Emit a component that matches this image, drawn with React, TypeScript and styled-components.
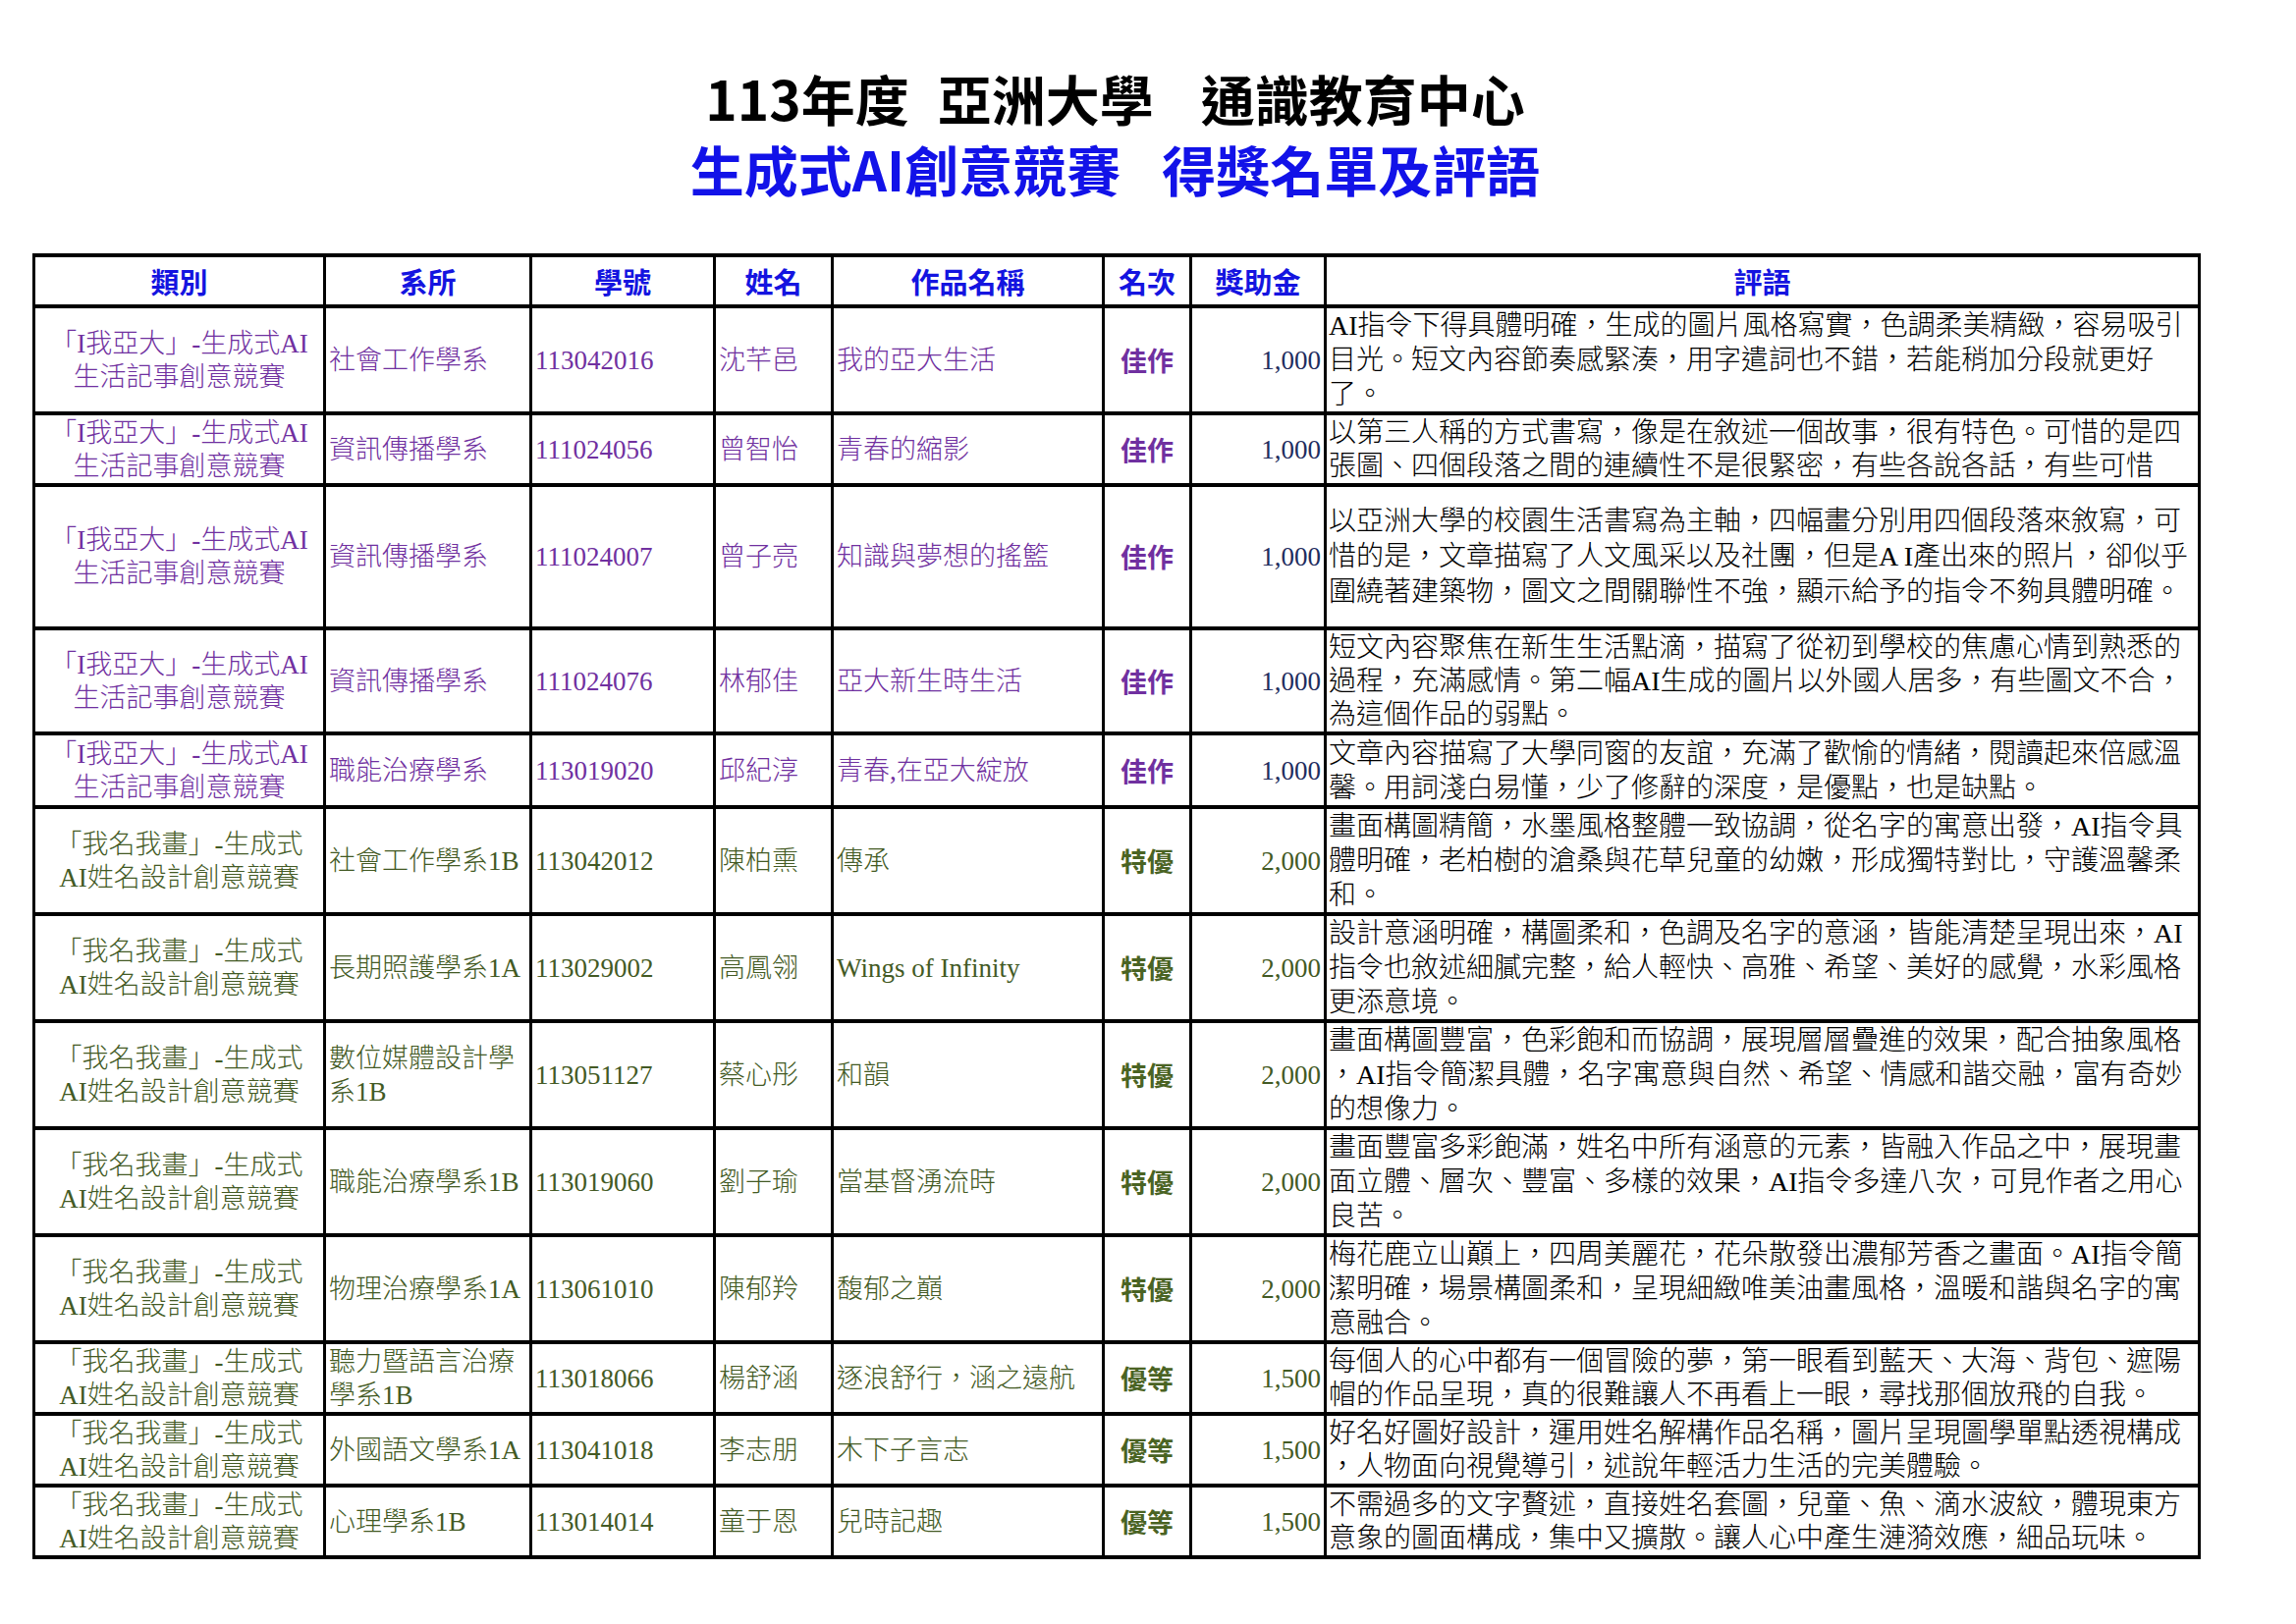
import React from "react";
import styled, { createGlobalStyle } from "styled-components";

const GlobalStyle = createGlobalStyle`
  html, body {
    margin: 0;
    padding: 0;
    background: #ffffff;
  }
  body {
    font-family: "Liberation Serif", "Noto Sans CJK TC", serif;
  }
`;

type Tone = "purple" | "green";

const tones: Record<Tone, { text: string; rank: string; amount: string }> = {
  purple: { text: "#7030a0", rank: "#7030a0", amount: "#1f2d5e" },
  green: { text: "#435a24", rank: "#4a6323", amount: "#435a24" }
};

const Page = styled.div`
  width: 2338px;
  min-height: 1654px;
  box-sizing: border-box;
  padding: 72px 0 0 33px;
`;

const Sheet = styled.div`
  width: 2205px;
`;

const Titles = styled.header`
  display: flex;
  flex-direction: column;
  align-items: center;
  gap: 17px;
`;

const Title = styled.h1<{ $color: string }>`
  margin: 0;
  font-family: "Noto Sans CJK TC", sans-serif;
  font-weight: 700;
  font-size: 55px;
  line-height: 55px;
  white-space: nowrap;
  color: ${p => p.$color};
`;

const Gap = styled.span<{ $w: number }>`
  display: inline-block;
  width: ${p => p.$w}px;
`;

const Table = styled.table`
  margin-top: 59px;
  width: 2205px;
  border-collapse: collapse;
  table-layout: fixed;
`;

const Row = styled.tr<{ $h: number }>`
  height: ${p => p.$h}px;
`;

const HeadCell = styled.th`
  border: 3px solid #000;
  border-top-width: 4px;
  border-bottom-width: 4px;
  padding: 0;
  font-family: "Noto Sans CJK TC", sans-serif;
  font-weight: 700;
  font-size: 29px;
  line-height: 36px;
  color: #1414e0;
  text-align: center;
  vertical-align: middle;
`;

const Cell = styled.td<{ $tone: Tone }>`
  border: 3px solid #000;
  border-top-width: 4px;
  border-bottom-width: 4px;
  padding: 0 3px;
  font-size: 27px;
  font-weight: 300;
  line-height: 34px;
  color: ${p => tones[p.$tone].text};
  text-align: left;
  vertical-align: middle;
  overflow: hidden;
`;

const CategoryCell = styled(Cell)`
  text-align: center;
  padding: 0;
`;

const RankCell = styled(Cell)`
  font-family: "Noto Sans CJK TC", sans-serif;
  font-weight: 700;
  text-align: center;
  color: ${p => tones[p.$tone].rank};
`;

const AmountCell = styled(Cell)`
  text-align: right;
  font-weight: 400;
  color: ${p => tones[p.$tone].amount};
`;

const CommentCell = styled(Cell)<{ $lh: number }>`
  font-size: 28px;
  line-height: ${p => p.$lh}px;
  color: #000;
  padding: 0 2px;
`;

const Line = styled.div`
  white-space: nowrap;
`;

const Lines = ({ lines }: { lines: string[] }) => (
  <>
    {lines.map((l, i) => (
      <Line key={i}>{l}</Line>
    ))}
  </>
);

type Entry = {
  tone: Tone;
  h: number;
  dept: string[];
  id: string;
  name: string;
  work: string;
  rank: string;
  amount: string;
  comment: string[];
};

const catA = ["「I我亞大」-生成式AI", "生活記事創意競賽"];
const catB = ["「我名我畫」-生成式", "AI姓名設計創意競賽"];

const entries: Entry[] = [
  {
    tone: "purple",
    h: 109,
    dept: ["社會工作學系"],
    id: "113042016",
    name: "沈芊邑",
    work: "我的亞大生活",
    rank: "佳作",
    amount: "1,000",
    comment: [
      "AI指令下得具體明確，生成的圖片風格寫實，色調柔美精緻，容易吸引",
      "目光。短文內容節奏感緊湊，用字遣詞也不錯，若能稍加分段就更好",
      "了。"
    ]
  },
  {
    tone: "purple",
    h: 73,
    dept: ["資訊傳播學系"],
    id: "111024056",
    name: "曾智怡",
    work: "青春的縮影",
    rank: "佳作",
    amount: "1,000",
    comment: [
      "以第三人稱的方式書寫，像是在敘述一個故事，很有特色。可惜的是四",
      "張圖、四個段落之間的連續性不是很緊密，有些各說各話，有些可惜"
    ]
  },
  {
    tone: "purple",
    h: 146,
    dept: ["資訊傳播學系"],
    id: "111024007",
    name: "曾子亮",
    work: "知識與夢想的搖籃",
    rank: "佳作",
    amount: "1,000",
    comment: [
      "以亞洲大學的校園生活書寫為主軸，四幅畫分別用四個段落來敘寫，可",
      "惜的是，文章描寫了人文風采以及社團，但是A I產出來的照片，卻似乎",
      "圍繞著建築物，圖文之間關聯性不強，顯示給予的指令不夠具體明確。"
    ]
  },
  {
    tone: "purple",
    h: 107,
    dept: ["資訊傳播學系"],
    id: "111024076",
    name: "林郁佳",
    work: "亞大新生時生活",
    rank: "佳作",
    amount: "1,000",
    comment: [
      "短文內容聚焦在新生生活點滴，描寫了從初到學校的焦慮心情到熟悉的",
      "過程，充滿感情。第二幅AI生成的圖片以外國人居多，有些圖文不合，",
      "為這個作品的弱點。"
    ]
  },
  {
    tone: "purple",
    h: 75,
    dept: ["職能治療學系"],
    id: "113019020",
    name: "邱紀淳",
    work: "青春,在亞大綻放",
    rank: "佳作",
    amount: "1,000",
    comment: [
      "文章內容描寫了大學同窗的友誼，充滿了歡愉的情緒，閱讀起來倍感溫",
      "馨。用詞淺白易懂，少了修辭的深度，是優點，也是缺點。"
    ]
  },
  {
    tone: "green",
    h: 109,
    dept: ["社會工作學系1B"],
    id: "113042012",
    name: "陳柏熏",
    work: "傳承",
    rank: "特優",
    amount: "2,000",
    comment: [
      "畫面構圖精簡，水墨風格整體一致協調，從名字的寓意出發，AI指令具",
      "體明確，老柏樹的滄桑與花草兒童的幼嫩，形成獨特對比，守護溫馨柔",
      "和。"
    ]
  },
  {
    tone: "green",
    h: 109,
    dept: ["長期照護學系1A"],
    id: "113029002",
    name: "高鳳翎",
    work: "Wings of Infinity",
    rank: "特優",
    amount: "2,000",
    comment: [
      "設計意涵明確，構圖柔和，色調及名字的意涵，皆能清楚呈現出來，AI",
      "指令也敘述細膩完整，給人輕快、高雅、希望、美好的感覺，水彩風格",
      "更添意境。"
    ]
  },
  {
    tone: "green",
    h: 109,
    dept: ["數位媒體設計學", "系1B"],
    id: "113051127",
    name: "蔡心彤",
    work: "和韻",
    rank: "特優",
    amount: "2,000",
    comment: [
      "畫面構圖豐富，色彩飽和而協調，展現層層疊進的效果，配合抽象風格",
      "，AI指令簡潔具體，名字寓意與自然、希望、情感和諧交融，富有奇妙",
      "的想像力。"
    ]
  },
  {
    tone: "green",
    h: 109,
    dept: ["職能治療學系1B"],
    id: "113019060",
    name: "劉子瑜",
    work: "當基督湧流時",
    rank: "特優",
    amount: "2,000",
    comment: [
      "畫面豐富多彩飽滿，姓名中所有涵意的元素，皆融入作品之中，展現畫",
      "面立體、層次、豐富、多樣的效果，AI指令多達八次，可見作者之用心",
      "良苦。"
    ]
  },
  {
    tone: "green",
    h: 109,
    dept: ["物理治療學系1A"],
    id: "113061010",
    name: "陳郁羚",
    work: "馥郁之巔",
    rank: "特優",
    amount: "2,000",
    comment: [
      "梅花鹿立山巔上，四周美麗花，花朵散發出濃郁芳香之畫面。AI指令簡",
      "潔明確，場景構圖柔和，呈現細緻唯美油畫風格，溫暖和諧與名字的寓",
      "意融合。"
    ]
  },
  {
    tone: "green",
    h: 73,
    dept: ["聽力暨語言治療", "學系1B"],
    id: "113018066",
    name: "楊舒涵",
    work: "逐浪舒行，涵之遠航",
    rank: "優等",
    amount: "1,500",
    comment: [
      "每個人的心中都有一個冒險的夢，第一眼看到藍天、大海、背包、遮陽",
      "帽的作品呈現，真的很難讓人不再看上一眼，尋找那個放飛的自我。"
    ]
  },
  {
    tone: "green",
    h: 73,
    dept: ["外國語文學系1A"],
    id: "113041018",
    name: "李志朋",
    work: "木下子言志",
    rank: "優等",
    amount: "1,500",
    comment: [
      "好名好圖好設計，運用姓名解構作品名稱，圖片呈現圖學單點透視構成",
      "，人物面向視覺導引，述說年輕活力生活的完美體驗。"
    ]
  },
  {
    tone: "green",
    h: 73,
    dept: ["心理學系1B"],
    id: "113014014",
    name: "童于恩",
    work: "兒時記趣",
    rank: "優等",
    amount: "1,500",
    comment: [
      "不需過多的文字贅述，直接姓名套圖，兒童、魚、滴水波紋，體現東方",
      "意象的圖面構成，集中又擴散。讓人心中產生漣漪效應，細品玩味。"
    ]
  }
];

const columns = [
  { label: "類別", w: 296 },
  { label: "系所", w: 210 },
  { label: "學號", w: 187 },
  { label: "姓名", w: 120 },
  { label: "作品名稱", w: 276 },
  { label: "名次", w: 89 },
  { label: "獎助金", w: 137 },
  { label: "評語", w: 890 }
];

// line height that keeps the comment inside its row (rows are fixed in the sheet)
const commentLineHeight = (e: Entry) =>
  Math.min(36, Math.floor((e.h - 4) / e.comment.length));

export default function App() {
  return (
    <>
      <GlobalStyle />
      <Page>
        <Sheet>
          <Titles>
            <Title $color="#000000">
              113年度<Gap $w={29} />亞洲大學<Gap $w={48} />通識教育中心
            </Title>
            <Title as="h2" $color="#1212e8">
              生成式AI創意競賽<Gap $w={42} />得獎名單及評語
            </Title>
          </Titles>
          <Table>
            <colgroup>
              {columns.map(c => (
                <col key={c.label} style={{ width: c.w }} />
              ))}
            </colgroup>
            <thead>
              <Row $h={52}>
                {columns.map(c => (
                  <HeadCell key={c.label}>{c.label}</HeadCell>
                ))}
              </Row>
            </thead>
            <tbody>
              {entries.map(e => (
                <Row key={e.id} $h={e.h}>
                  <CategoryCell $tone={e.tone}>
                    <Lines lines={e.tone === "purple" ? catA : catB} />
                  </CategoryCell>
                  <Cell $tone={e.tone}>
                    <Lines lines={e.dept} />
                  </Cell>
                  <Cell $tone={e.tone}>{e.id}</Cell>
                  <Cell $tone={e.tone}>{e.name}</Cell>
                  <Cell $tone={e.tone}>{e.work}</Cell>
                  <RankCell $tone={e.tone}>{e.rank}</RankCell>
                  <AmountCell $tone={e.tone}>{e.amount}</AmountCell>
                  <CommentCell $tone={e.tone} $lh={commentLineHeight(e)}>
                    <Lines lines={e.comment} />
                  </CommentCell>
                </Row>
              ))}
            </tbody>
          </Table>
        </Sheet>
      </Page>
    </>
  );
}
